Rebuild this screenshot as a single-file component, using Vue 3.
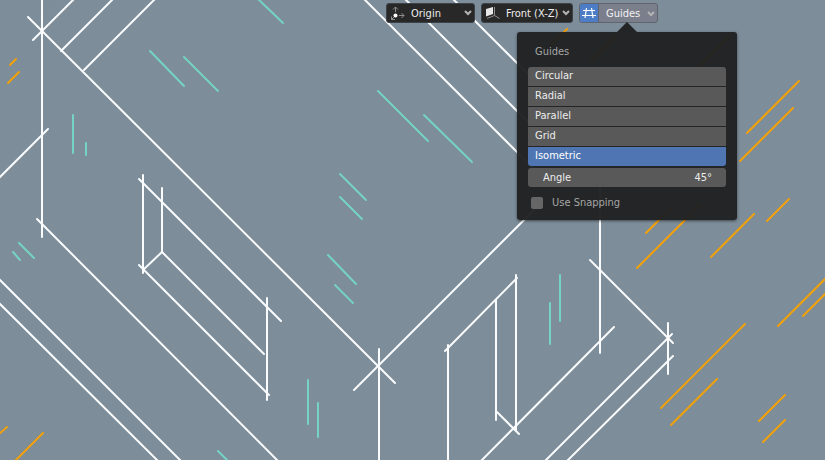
<script setup>
import { ref } from 'vue'

const origin = ref('Origin')
const plane = ref('Front (X-Z)')
const guidesOn = ref(true)
const open = ref(true)
const guide = ref('Isometric')
const angle = ref('45°')
const snapping = ref(false)

const guides = ['Circular', 'Radial', 'Parallel', 'Grid', 'Isometric']

// Each stroke is [x1, y1, x2, y2] in canvas units.
const strokes = {
  ink: [
    [42, -4, 42, 237], [28, 17, 395, 383], [33, 40, 76, -3], [61, 51, 115, -3], [84, 70, 157, -3],
    [-2, 179, 48, 129], [37, 219, 280, 463], [-2, 278, 183, 463], [-2, 302, 160, 463],
    [143, 175, 143, 273], [162, 188, 162, 252], [139, 179, 281, 321], [139, 265, 269, 395],
    [143, 270, 162, 252], [162, 252, 264, 354], [267, 298, 267, 400],
    [362, -3, 540, 175], [403, -3, 540, 134], [451, -3, 540, 86],
    [354, 390, 540, 204], [379, 349, 379, 464], [445, 351, 517, 278], [448, 345, 448, 464],
    [496, 300, 496, 420], [516, 275, 516, 430], [497, 412, 519, 434],
    [479, 463, 614, 327], [600, 180, 600, 353], [590, 260, 673, 343], [668, 323, 668, 374],
    [541, 465, 672, 334], [565, 463, 673, 356]
  ],
  mint: [
    [257, -2, 283, 23], [150, 51, 184, 86], [184, 57, 218, 91], [73, 115, 73, 153], [86, 143, 86, 155],
    [19, 243, 34, 258], [13, 252, 20, 260], [378, 91, 428, 141], [424, 115, 472, 162],
    [340, 174, 366, 200], [340, 197, 362, 219], [328, 255, 356, 284], [335, 285, 353, 303],
    [308, 380, 308, 424], [318, 403, 318, 437], [218, 451, 231, 464], [560, 275, 560, 321], [550, 303, 550, 344]
  ],
  amber: [
    [10, 65, 16, 59], [8, 83, 19, 72], [-2, 435, 7, 427], [13, 463, 43, 433], [550, 46, 567, 29],
    [590, 62, 615, 37], [700, 66, 730, 36],
    [747, 133, 799, 81], [740, 161, 793, 108], [767, 221, 789, 199], [711, 257, 754, 214],
    [646, 233, 670, 209], [637, 268, 700, 205], [778, 326, 828, 276], [803, 316, 828, 291],
    [661, 408, 745, 324], [671, 425, 717, 379], [759, 421, 785, 395], [763, 442, 785, 420]
  ]
}
</script>

<template>
  <main class="viewport">
    <svg class="canvas" viewBox="0 0 825 460" preserveAspectRatio="xMinYMin slice" aria-hidden="true">
      <g v-for="(lines, name) in strokes" :key="name" :class="name">
        <line v-for="(l, i) in lines" :key="i" :x1="l[0]" :y1="l[1]" :x2="l[2]" :y2="l[3]" />
      </g>
    </svg>

    <header class="toolbar">
      <div class="dropdown">
        <svg class="lead" width="16" height="16" viewBox="0 0 16 16" aria-hidden="true">
          <g fill="none" stroke="#8f8f8f" stroke-width="1">
            <path d="M5.500 7V2M3 4.500 5.500 2 8 4.500M9 10.500h5M11.500 8 14 10.500l-2.500 2.500M4 12l-2.500 2.500M1.500 11.500v3H5" />
          </g>
          <circle cx="5.500" cy="10.500" r="2" fill="#fff" />
        </svg>
        <select v-model="origin" aria-label="Drawing placement">
          <option>Origin</option>
          <option>Surface</option>
        </select>
        <svg class="chevron" width="8" height="6" viewBox="0 0 8 6" aria-hidden="true"><path d="M1 1l3 3 3-3" /></svg>
      </div>

      <div class="dropdown wide">
        <svg class="lead" width="16" height="16" viewBox="0 0 16 16" aria-hidden="true">
          <path d="M1 4 8 2v7l-7 2.500z" fill="#e8e8e8" />
          <path d="M9.500 2v8.500l5 3M9.500 10.500 2 13.500" fill="none" stroke="#8c8c8c" />
        </svg>
        <select v-model="plane" aria-label="Drawing plane">
          <option>Front (X-Z)</option>
          <option>Side (Y-Z)</option>
          <option>Top (X-Y)</option>
        </select>
        <svg class="chevron" width="8" height="6" viewBox="0 0 8 6" aria-hidden="true"><path d="M1 1l3 3 3-3" /></svg>
      </div>

      <div class="guides">
        <button class="toggle" type="button" aria-label="Use guides" :aria-pressed="guidesOn" @click="guidesOn = !guidesOn">
          <svg width="16" height="16" viewBox="0 0 16 16" aria-hidden="true">
            <path d="M2 5.500h12M1 10.500h14M5.500 3 4 13M10.500 3 12 13" fill="none" stroke="#fff" stroke-width="1.200" />
          </svg>
        </button>
        <button class="trigger" type="button" :aria-expanded="open" @click="open = !open">
          Guides
          <svg class="chevron" width="8" height="6" viewBox="0 0 8 6" aria-hidden="true"><path d="M1 1l3 3 3-3" /></svg>
        </button>

        <section v-if="open" class="popover">
          <h2>Guides</h2>
          <div class="options" role="radiogroup" aria-label="Guides">
            <label v-for="g in guides" :key="g" class="option" :class="{ selected: g === guide }">
              <input v-model="guide" type="radio" name="guide" :value="g" />
              <span>{{ g }}</span>
            </label>
          </div>
          <div class="field">
            <label for="angle">Angle</label>
            <input id="angle" v-model="angle" type="text" />
          </div>
          <label class="check">
            <input v-model="snapping" type="checkbox" />
            <span>Use Snapping</span>
          </label>
        </section>
      </div>
    </header>
  </main>
</template>

<style>
body {
  background: #7d8d99;
}
</style>

<style scoped>
.viewport {
  position: relative;
  min-height: 100vh;
  overflow: hidden;
  background: #7d8d99;
  color: #ededed;
  font: 11px/16px "DejaVu Sans Condensed", "DejaVu Sans", sans-serif;
}

.viewport * {
  box-sizing: border-box;
}

button,
select,
input {
  margin: 0;
  border: 0;
  padding: 0;
  background: none;
  color: inherit;
  font: inherit;
  appearance: none;
}

.canvas {
  position: absolute;
  inset: 0;
  width: 100%;
  height: 100%;
  fill: none;
  stroke-width: 2;
  stroke-linecap: round;
}

.ink { stroke: #fafcfd; }
.mint { stroke: #75d3c3; }
.amber { stroke: #f3a108; }

.toolbar {
  position: relative;
  display: flex;
  justify-content: flex-end;
  gap: 6px;
  padding: 3px 167px 0 8px;
}

.dropdown {
  display: grid;
  grid-template-columns: 25px 1fr 13px;
  align-items: center;
  width: 89px;
  height: 20px;
  border: 1px solid #3c4247;
  border-radius: 3px;
  background: #282828;
}

.wide {
  width: 92px;
}

.dropdown select {
  grid-area: 1 / 1 / 2 / 4;
  height: 18px;
  padding: 1px 0 0 24px;
  line-height: 18px;
}

.dropdown option {
  background: #282828;
}

.lead,
.dropdown .chevron {
  z-index: 1;
  pointer-events: none;
}

.lead {
  grid-area: 1 / 1;
  margin-left: 3px;
}

.dropdown .chevron {
  grid-area: 1 / 3;
  justify-self: end;
  margin-right: 2px;
}

.chevron {
  fill: none;
  stroke: #b4b4b4;
  stroke-width: 2;
}

.guides {
  position: relative;
  display: flex;
  height: 20px;
  border: 1px solid #5e656f;
  border-radius: 3px;
  background: #7b7f8c;
}

.toggle {
  display: grid;
  place-items: center;
  width: 19px;
  border-right: 1px solid #5e656f;
  border-radius: 2px 0 0 2px;
  background: #4c7dc6;
}

.trigger {
  display: flex;
  align-items: center;
  justify-content: space-between;
  width: 58px;
  padding: 1px 2px 0 7px;
  color: #f2f2f2;
}

.popover {
  position: absolute;
  top: 28px;
  left: -63px;
  display: grid;
  width: 220px;
  padding: 10px 11px 9px;
  border-radius: 3px;
  background: rgb(31 32 33 / 96%);
  box-shadow: 0 1px 3px rgb(0 0 0 / 50%);
}

.popover::before {
  content: "";
  position: absolute;
  bottom: 100%;
  left: 50%;
  margin-left: -10px;
  border: 10px solid transparent;
  border-top-width: 0;
  border-bottom-color: #222425;
}

h2 {
  margin: 0 0 5px;
  padding: 0 7px;
  color: #a6a6a6;
  font: inherit;
  line-height: 20px;
}

.options {
  display: grid;
  gap: 1px;
  overflow: hidden;
  border-radius: 3px;
}

.option {
  display: grid;
  height: 19px;
  background: #595959;
}

.option input,
.option span {
  grid-area: 1 / 1;
}

.option span {
  padding: 0 7px;
  line-height: 18px;
}

.selected {
  background: #4f76b3;
  color: #fff;
}

.field {
  display: flex;
  align-items: center;
  justify-content: space-between;
  height: 19px;
  margin-top: 2px;
  padding: 1px 14px 0 15px;
  border-radius: 3px;
  background: #595959;
}

.field input {
  width: 64px;
  text-align: right;
}

.check {
  display: flex;
  align-items: center;
  gap: 9px;
  margin-top: 8px;
  padding-left: 3px;
  color: #a6a6a6;
}

.check input {
  width: 12px;
  height: 12px;
  border-radius: 2px;
  background: #666;
}

.check input:checked {
  background: #4f76b3;
}
</style>
